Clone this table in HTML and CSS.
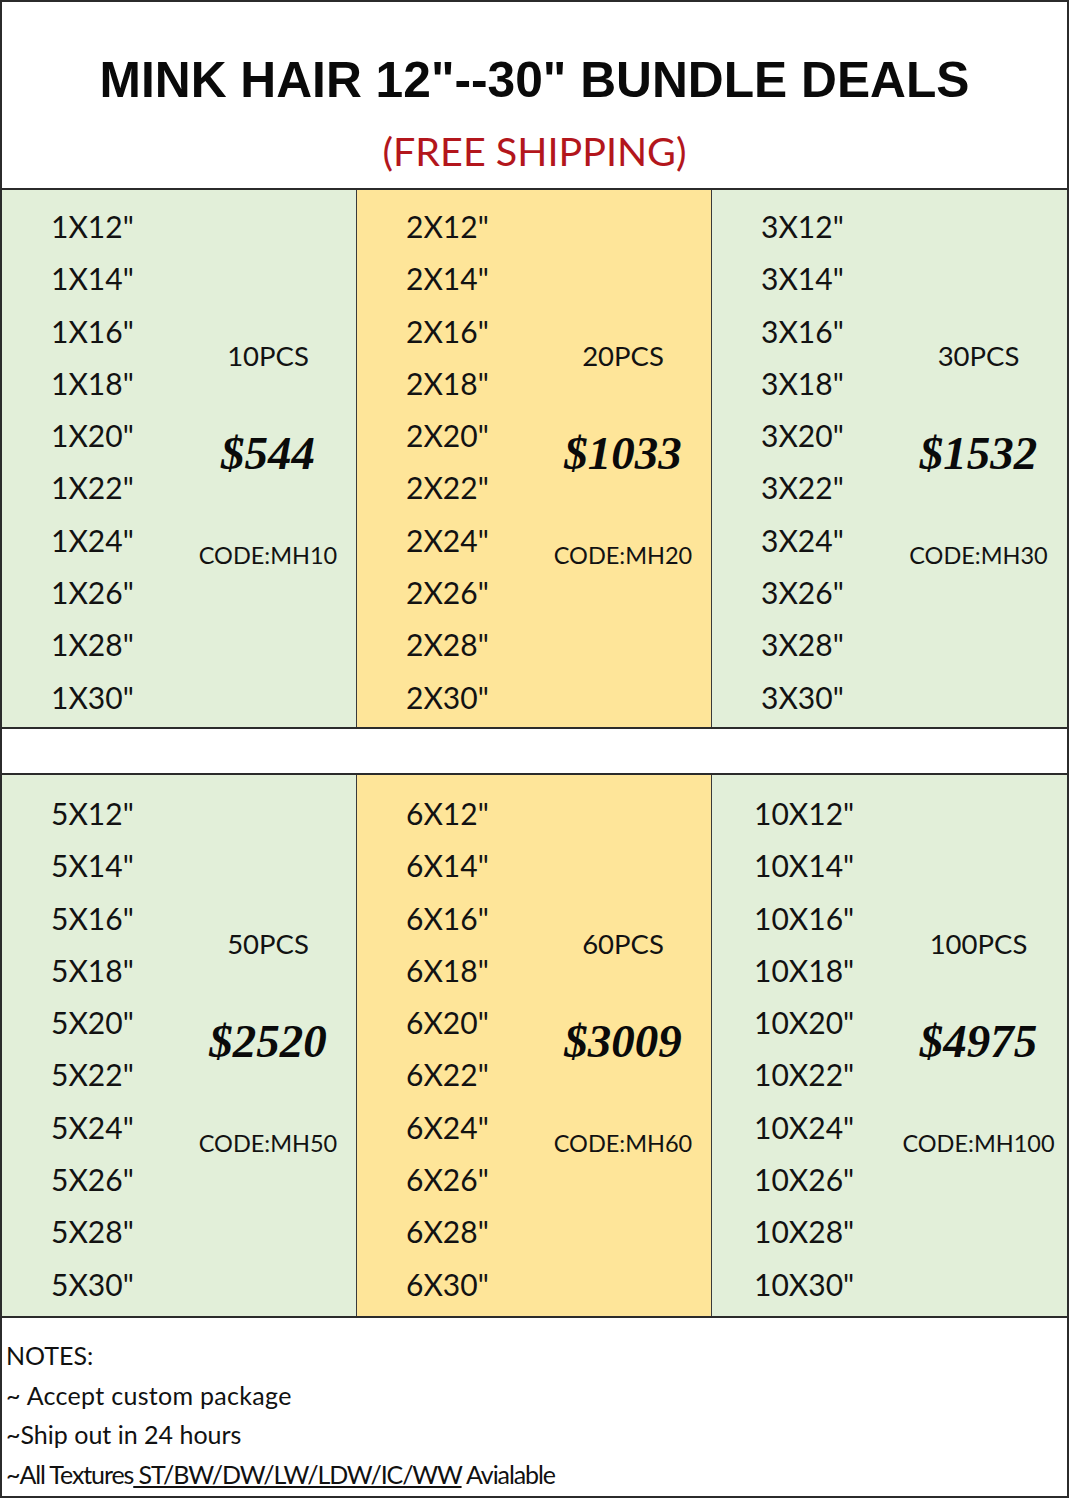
FILE: index.html
```html
<!DOCTYPE html>
<html>
<head>
<meta charset="utf-8">
<link rel="stylesheet" href="styles.css">
</head>
<body>
<div class="sheet">
  <header class="head">
    <h1 class="title">MINK HAIR 12"--30" BUNDLE DEALS</h1>
    <p class="sub">(FREE SHIPPING)</p>
  </header>

  <section class="deals first">
    <div class="col green">
      <ul class="sizes">
        <li>1X12"</li><li>1X14"</li><li>1X16"</li><li>1X18"</li><li>1X20"</li>
        <li>1X22"</li><li>1X24"</li><li>1X26"</li><li>1X28"</li><li>1X30"</li>
      </ul>
      <div class="info"><span class="pcs">10PCS</span><span class="price">$544</span><span class="code">CODE:MH10</span></div>
    </div>
    <div class="col yellow">
      <ul class="sizes">
        <li>2X12"</li><li>2X14"</li><li>2X16"</li><li>2X18"</li><li>2X20"</li>
        <li>2X22"</li><li>2X24"</li><li>2X26"</li><li>2X28"</li><li>2X30"</li>
      </ul>
      <div class="info"><span class="pcs">20PCS</span><span class="price">$1033</span><span class="code">CODE:MH20</span></div>
    </div>
    <div class="col green last">
      <ul class="sizes">
        <li>3X12"</li><li>3X14"</li><li>3X16"</li><li>3X18"</li><li>3X20"</li>
        <li>3X22"</li><li>3X24"</li><li>3X26"</li><li>3X28"</li><li>3X30"</li>
      </ul>
      <div class="info"><span class="pcs">30PCS</span><span class="price">$1532</span><span class="code">CODE:MH30</span></div>
    </div>
  </section>

  <div class="spacer"></div>

  <section class="deals second">
    <div class="col green">
      <ul class="sizes">
        <li>5X12"</li><li>5X14"</li><li>5X16"</li><li>5X18"</li><li>5X20"</li>
        <li>5X22"</li><li>5X24"</li><li>5X26"</li><li>5X28"</li><li>5X30"</li>
      </ul>
      <div class="info"><span class="pcs">50PCS</span><span class="price">$2520</span><span class="code">CODE:MH50</span></div>
    </div>
    <div class="col yellow">
      <ul class="sizes">
        <li>6X12"</li><li>6X14"</li><li>6X16"</li><li>6X18"</li><li>6X20"</li>
        <li>6X22"</li><li>6X24"</li><li>6X26"</li><li>6X28"</li><li>6X30"</li>
      </ul>
      <div class="info"><span class="pcs">60PCS</span><span class="price">$3009</span><span class="code">CODE:MH60</span></div>
    </div>
    <div class="col green last">
      <ul class="sizes wide">
        <li>10X12"</li><li>10X14"</li><li>10X16"</li><li>10X18"</li><li>10X20"</li>
        <li>10X22"</li><li>10X24"</li><li>10X26"</li><li>10X28"</li><li>10X30"</li>
      </ul>
      <div class="info"><span class="pcs">100PCS</span><span class="price">$4975</span><span class="code">CODE:MH100</span></div>
    </div>
  </section>

  <footer class="notes">
    <p>NOTES:</p>
    <p class="wide">~ Accept custom package</p>
    <p>~Ship out in 24 hours</p>
    <p class="tight">~All Textures<span class="ul"> ST/BW/DW/LW/LDW/IC/WW</span> Avialable</p>
  </footer>
</div>
</body>
</html>
```

FILE: styles.css
```css
* { box-sizing: border-box; }

body {
  margin: 0;
  background: #ffffff;
  color: #111111;
  font-family: Lato, "Noto Sans", sans-serif;
}

.sheet {
  width: 1069px;
  border: 2px solid #2b2b2b;
  background: #ffffff;
}

.head {
  height: 186px;
  padding-top: 48px;
  text-align: center;
}

.title {
  margin: 0;
  font-family: "Liberation Sans", Arial, sans-serif;
  font-weight: 700;
  font-size: 49.7px;
  line-height: 60px;
  color: #0a0a0a;
}

.sub {
  margin: 16px 0 0;
  font-family: Lato, "Noto Sans", sans-serif;
  font-size: 39.5px;
  line-height: 50px;
  color: #b3161c;
}

.deals {
  display: grid;
  grid-template-columns: 355px 355px 1fr;
  border-top: 2px solid #2b2b2b;
  border-bottom: 2px solid #2b2b2b;
}

.deals.first { height: 541px; }
.deals.second { height: 545px; }

.col {
  display: grid;
  grid-template-columns: 178px 1fr;
  border-right: 1px solid #3a3a3a;
}

.col.last { border-right: none; }

.green { background: #e2efd9; }
.yellow { background: #fee599; }

.sizes {
  list-style: none;
  margin: 0;
  padding: 10px 0 0 49px;
  font-size: 30px;
  line-height: 52.3px;
  color: #121212;
}

.second .sizes { padding-top: 12px; }
.sizes.wide { padding-left: 42px; }

.info {
  display: flex;
  flex-direction: column;
  align-items: center;
  padding-top: 146px;
}

.second .info { padding-top: 149px; }

.pcs {
  font-size: 27.5px;
  line-height: 40px;
  color: #121212;
}

.price {
  margin-top: 47px;
  font-family: "Liberation Serif", "Times New Roman", serif;
  font-weight: 700;
  font-style: italic;
  font-size: 47px;
  line-height: 60px;
  color: #0a0a0a;
}

.code {
  margin-top: 52px;
  font-size: 23.5px;
  line-height: 40px;
  color: #121212;
}

.spacer { height: 44px; }

.notes {
  height: 178px;
  padding: 18px 0 0 4px;
  font-size: 25px;
  line-height: 39.5px;
  color: #111111;
}

.notes p { margin: 0; }

.notes .wide { letter-spacing: 0.3px; }
.notes .tight { letter-spacing: -1.1px; }

.ul { text-decoration: underline; }
```
